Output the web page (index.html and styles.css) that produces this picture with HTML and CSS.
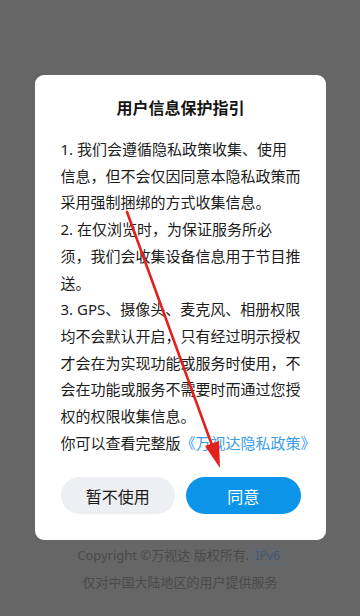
FILE: index.html
```html
<!DOCTYPE html>
<html lang="zh-CN">
<head>
<meta charset="utf-8">
<title>用户信息保护指引</title>
<link rel="stylesheet" href="styles.css">
</head>
<body>
<div class="page">
  <div class="page-main"></div>
  <footer class="footer">
    <p class="footer-line">Copyright ©万视达 版权所有. <span class="ipv6">IPv6</span></p>
    <p class="footer-line">仅对中国大陆地区的用户提供服务</p>
  </footer>
</div>

<div class="overlay">
  <div class="dialog">
    <h2 class="dialog-title">用户信息保护指引</h2>
    <div class="dialog-body">
      <p class="para">1. 我们会遵循隐私政策收集、使用<br>信息，但不会仅因同意本隐私政策而<br>采用强制捆绑的方式收集信息。</p>
      <p class="para">2. 在仅浏览时，为保证服务所必<br>须，我们会收集设备信息用于节目推<br>送。</p>
      <p class="para">3. GPS、摄像头、麦克风、相册权限<br>均不会默认开启，只有经过明示授权<br>才会在为实现功能或服务时使用，不<br>会在功能或服务不需要时而通过您授<br>权的权限收集信息。</p>
      <p class="para">你可以查看完整版<a class="link" href="#">《万视达隐私政策》</a></p>
    </div>
    <div class="dialog-actions">
      <button class="btn btn-cancel" type="button">暂不使用</button>
      <button class="btn btn-ok" type="button">同意</button>
    </div>
  </div>
</div>

<svg class="annotation" width="360" height="616" viewBox="0 0 360 616" xmlns="http://www.w3.org/2000/svg">
  <line x1="127" y1="212" x2="213" y2="448" stroke="#e3201c" stroke-width="2.6" stroke-linecap="round"/>
  <polygon points="220,468 205,446 219,441" fill="#e3201c"/>
</svg>
</body>
</html>
```

FILE: styles.css
```css
* {
  box-sizing: border-box;
}

html, body {
  margin: 0;
  padding: 0;
}

body {
  width: 360px;
  height: 616px;
  overflow: hidden;
  background: #666666;
  font-family: "Noto Sans", "Noto Sans CJK SC", sans-serif;
  position: relative;
}

.page {
  display: flex;
  flex-direction: column;
  min-height: 616px;
}

.page-main {
  flex: 1;
}

.footer {
  padding: 0 0 20px;
  text-align: center;
  color: #4a4a4a;
  font-size: 13px;
}

.footer-line {
  margin: 0;
  line-height: 27px;
}

.ipv6 {
  display: inline-block;
  border: 1px solid #55677a;
  color: #3c5a78;
  font-size: 12px;
  line-height: 14px;
  padding: 0 2px;
}

.overlay {
  position: fixed;
  left: 0;
  top: 0;
  width: 360px;
  height: 616px;
  display: flex;
  justify-content: center;
  align-items: flex-start;
  padding-top: 75px;
}

.dialog {
  width: 291px;
  background: #ffffff;
  border-radius: 9px;
  padding: 22px 25px 26px 26px;
  display: flex;
  flex-direction: column;
}

.dialog-title {
  margin: 0;
  text-align: center;
  font-size: 16px;
  line-height: 22px;
  font-weight: 700;
  color: #141414;
}

.dialog-body {
  margin-top: 17px;
  font-size: 15px;
  line-height: 26.7px;
  color: #1c1c1c;
  white-space: nowrap;
}

.para {
  margin: 0;
}

.link {
  color: #3a9de6;
  text-decoration: none;
}

.dialog-actions {
  margin-top: 21px;
  display: flex;
  gap: 11px;
}

.btn {
  flex: 1;
  height: 37px;
  border: none;
  border-radius: 19px;
  font-family: "Noto Sans", "Noto Sans CJK SC", sans-serif;
  font-size: 16px;
  padding: 0;
}

.btn-cancel {
  background: #eeeff2;
  color: #1a1a1a;
}

.btn-ok {
  background: #0c95e8;
  color: #ffffff;
}

.annotation {
  position: absolute;
  left: 0;
  top: 0;
  pointer-events: none;
}
```
